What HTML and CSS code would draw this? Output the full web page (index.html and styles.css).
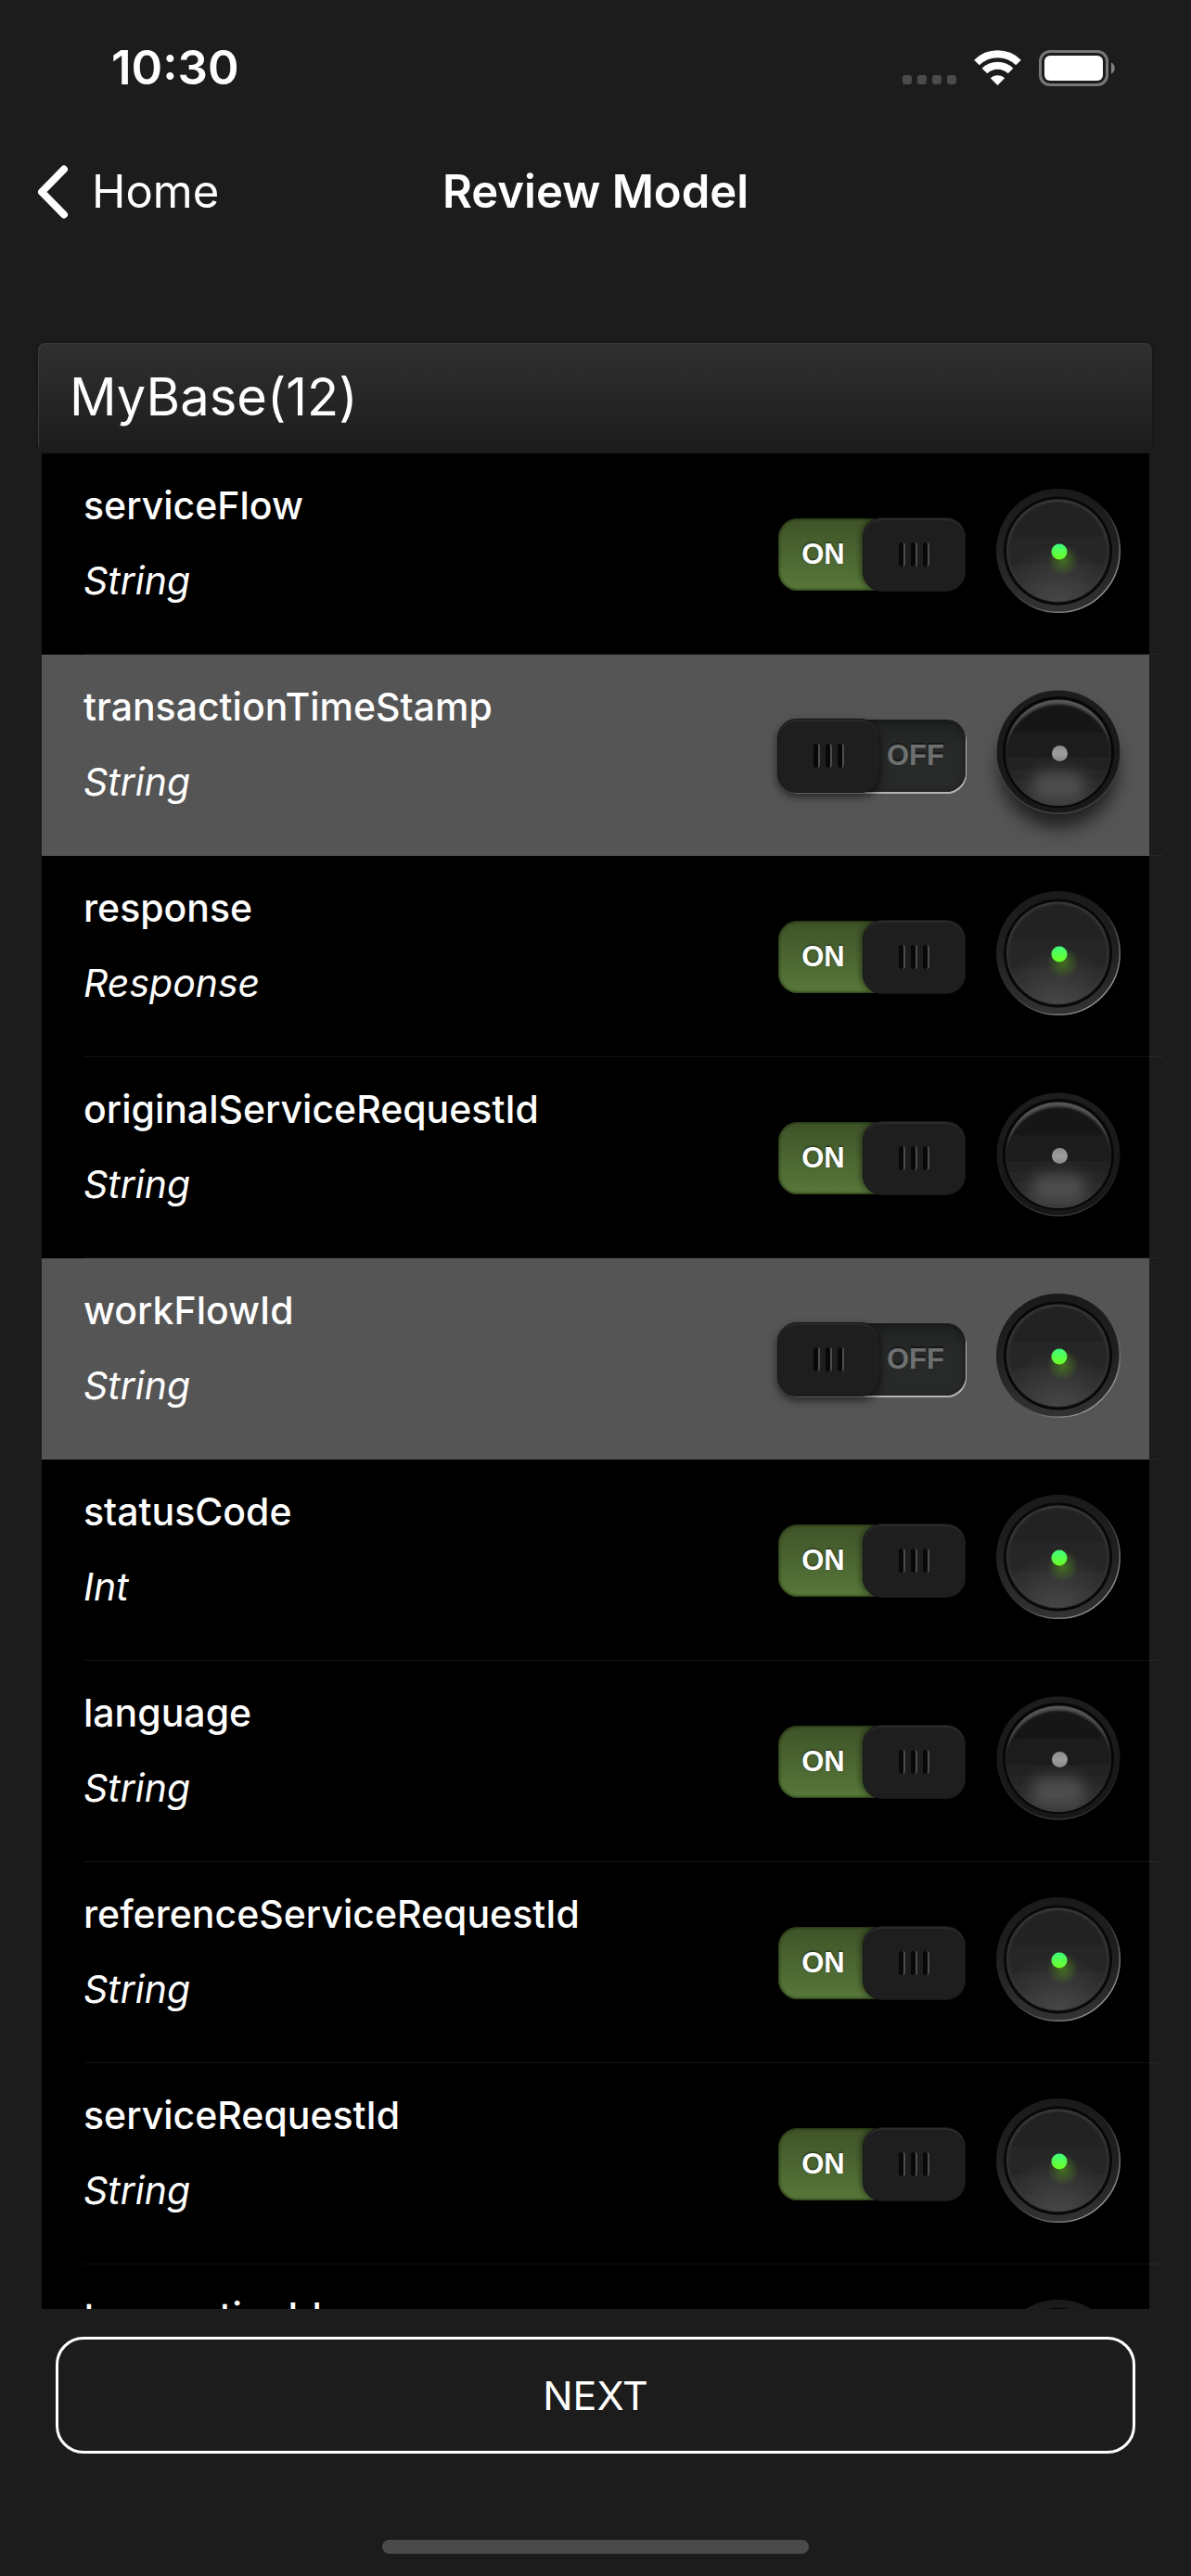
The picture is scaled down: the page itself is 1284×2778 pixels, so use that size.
FILE: index.html
```
<!DOCTYPE html>
<html lang="en">
<head>
<meta charset="utf-8">
<meta name="viewport" content="width=device-width, initial-scale=1">
<title>Review Model</title>
<link rel="stylesheet" href="styles.css">
</head>
<body>
<svg class="defs" aria-hidden="true">
  <defs>
    <linearGradient id="rim-lit" x1="0" y1="0" x2="0" y2="1"><stop offset="0" stop-color="#1a1a1a"/><stop offset=".5" stop-color="#202020"/><stop offset="1" stop-color="#333"/></linearGradient>
    <linearGradient id="edge-lit" x1="0" y1="0" x2="1" y2="1"><stop offset=".5" stop-color="#fff" stop-opacity="0"/><stop offset=".85" stop-color="#fff" stop-opacity=".5"/></linearGradient>
    <linearGradient id="face-lit" x1="0" y1="0" x2="0" y2="1"><stop offset="0" stop-color="#202020"/><stop offset=".6" stop-color="#282828"/><stop offset="1" stop-color="#303030"/></linearGradient>
    <radialGradient id="sheen-lit" cx=".5" cy="1.05" r=".6"><stop offset="0" stop-color="#484848"/><stop offset="1" stop-color="#484848" stop-opacity="0"/></radialGradient>
    <linearGradient id="lip-lit" x1="0" y1="0" x2="0" y2="1"><stop offset="0" stop-color="#3c3c3c"/><stop offset=".5" stop-color="#343434"/><stop offset="1" stop-color="#333"/></linearGradient>
    <linearGradient id="led-lit" x1="0" y1="0" x2="0" y2="1"><stop offset="0" stop-color="#3dff7c"/><stop offset="1" stop-color="#70ff24"/></linearGradient>
    <radialGradient id="glow"><stop offset="0" stop-color="#4d8a1c" stop-opacity=".7"/><stop offset="1" stop-color="#4d8a1c" stop-opacity="0"/></radialGradient>
    <linearGradient id="rim-dim" x1="0" y1="0" x2="0" y2="1"><stop offset="0" stop-color="#1d1d1d"/><stop offset=".5" stop-color="#191919"/><stop offset="1" stop-color="#171717"/></linearGradient>
    <linearGradient id="edge-dim" x1="0" y1="0" x2="0" y2="1"><stop offset=".6" stop-color="#444" stop-opacity="0"/><stop offset="1" stop-color="#444"/></linearGradient>
    <linearGradient id="crest" x1="0" y1="0" x2="0" y2="1"><stop offset="0" stop-color="#555"/><stop offset=".3" stop-color="#4a4a4a"/><stop offset=".5" stop-color="#262626"/><stop offset="1" stop-color="#383838"/></linearGradient>
    <linearGradient id="face-dim" x1="0" y1="0" x2="0" y2="1"><stop offset="0" stop-color="#171717"/><stop offset=".4" stop-color="#1b1b1b"/><stop offset="1" stop-color="#363636"/></linearGradient>
    <linearGradient id="led-dim" x1="0" y1="0" x2="0" y2="1"><stop offset="0" stop-color="#8c8c8c"/><stop offset=".5" stop-color="#9c9c9c"/><stop offset="1" stop-color="#8a8a8a"/></linearGradient>
    <filter id="soft" x="-50%" y="-80%" width="200%" height="260%"><feGaussianBlur stdDeviation="8"/></filter>
    <filter id="fine" x="-10%" y="-10%" width="120%" height="120%"><feGaussianBlur stdDeviation="1"/></filter>
    <clipPath id="face-clip"><circle cx="67" cy="68" r="57"/></clipPath>
  </defs>
  <symbol id="knob-lit" viewBox="0 0 134 134">
    <circle cx="67" cy="67" r="67" fill="url(#rim-lit)"/>
    <circle cx="67" cy="67" r="66.3" fill="none" stroke="url(#edge-lit)" stroke-width="1.4"/>
    <circle cx="66.5" cy="67" r="58.5" fill="#080808"/>
    <circle cx="66.5" cy="67" r="55.5" fill="url(#lip-lit)"/>
    <circle cx="66.5" cy="67.5" r="53.5" fill="url(#face-lit)" filter="url(#fine)"/>
    <circle cx="66.5" cy="67" r="54.5" fill="url(#sheen-lit)"/>
    <circle cx="72" cy="77" r="17" fill="url(#glow)"/>
    <circle cx="68" cy="68" r="8.5" fill="url(#led-lit)"/>
  </symbol>
  <symbol id="knob-dim" viewBox="0 0 134 134">
    <circle cx="67" cy="67" r="66.5" fill="url(#rim-dim)"/>
    <circle cx="67" cy="67" r="66" fill="none" stroke="url(#edge-dim)" stroke-width="1"/>
    <circle cx="67" cy="67" r="60" fill="#070707"/>
    <circle cx="67" cy="67.5" r="57" fill="url(#crest)"/>
    <g clip-path="url(#face-clip)">
      <circle cx="67" cy="73" r="57.5" fill="url(#face-dim)" filter="url(#fine)"/>
      <rect x="38" y="88" width="58" height="32" rx="14" fill="#4d4d4d" filter="url(#soft)"/>
    </g>
    <circle cx="68.5" cy="68.5" r="8.5" fill="url(#led-dim)"/>
  </symbol>
</svg>

<div class="app">
  <header class="status-bar">
    <time class="clock">10:30</time>
    <div class="indicators">
      <span class="signal"><i></i><i></i><i></i><i></i></span>
      <svg class="wifi" viewBox="0 0 51 38" aria-label="Wi-Fi">
        <g fill="none" stroke="#fff">
          <path d="M3 13.5A32 32 0 0 1 48 13.5" stroke-width="8"/>
          <path d="M11.5 22.500A20 20 0 0 1 39.500 22.500" stroke-width="8"/>
        </g>
        <path d="M25.500 38 17.800 30.300a11 11 0 0 1 15.400 0z" fill="#fff"/>
      </svg>
      <svg class="battery" viewBox="0 0 82 39" aria-label="Battery full">
        <rect x="1.5" y="1.5" width="72" height="36" rx="10.5" fill="none" stroke="#777" stroke-width="3"/>
        <rect x="6" y="6" width="63" height="27" rx="6" fill="#fff"/>
        <path d="M78 13.500c5 2 5 10 0 12z" fill="#808080"/>
      </svg>
    </div>
  </header>

  <nav class="nav-bar">
    <a class="back" href="#home">
      <svg class="chevron" viewBox="0 0 34 58" aria-hidden="true"><path d="M29 4.500 5 29 29 53.500" fill="none" stroke="#fff" stroke-width="8" stroke-linecap="round" stroke-linejoin="round"/></svg>
      <span>Home</span>
    </a>
    <h1 class="title">Review Model</h1>
  </nav>

  <main class="model">
    <h2 class="section-head">MyBase(12)</h2>
    <ul class="fields">
      <li class="field">
        <div class="text"><span class="name">serviceFlow</span><span class="type">String</span></div>
        <label class="toggle"><input type="checkbox" aria-label="serviceFlow" checked><span class="on">ON</span><span class="off">OFF</span><span class="thumb"><i></i><i></i><i></i></span></label>
        <button class="knob lit" type="button" aria-label="serviceFlow options"><svg><use href="#knob-lit"/></svg></button>
      </li>
      <li class="field excluded">
        <div class="text"><span class="name">transactionTimeStamp</span><span class="type">String</span></div>
        <label class="toggle"><input type="checkbox" aria-label="transactionTimeStamp"><span class="on">ON</span><span class="off">OFF</span><span class="thumb"><i></i><i></i><i></i></span></label>
        <button class="knob dim" type="button" aria-label="transactionTimeStamp options"><svg><use href="#knob-dim"/></svg></button>
      </li>
      <li class="field">
        <div class="text"><span class="name">response</span><span class="type">Response</span></div>
        <label class="toggle"><input type="checkbox" aria-label="response" checked><span class="on">ON</span><span class="off">OFF</span><span class="thumb"><i></i><i></i><i></i></span></label>
        <button class="knob lit" type="button" aria-label="response options"><svg><use href="#knob-lit"/></svg></button>
      </li>
      <li class="field">
        <div class="text"><span class="name">originalServiceRequestId</span><span class="type">String</span></div>
        <label class="toggle"><input type="checkbox" aria-label="originalServiceRequestId" checked><span class="on">ON</span><span class="off">OFF</span><span class="thumb"><i></i><i></i><i></i></span></label>
        <button class="knob dim" type="button" aria-label="originalServiceRequestId options"><svg><use href="#knob-dim"/></svg></button>
      </li>
      <li class="field excluded">
        <div class="text"><span class="name">workFlowId</span><span class="type">String</span></div>
        <label class="toggle"><input type="checkbox" aria-label="workFlowId"><span class="on">ON</span><span class="off">OFF</span><span class="thumb"><i></i><i></i><i></i></span></label>
        <button class="knob lit" type="button" aria-label="workFlowId options"><svg><use href="#knob-lit"/></svg></button>
      </li>
      <li class="field">
        <div class="text"><span class="name">statusCode</span><span class="type">Int</span></div>
        <label class="toggle"><input type="checkbox" aria-label="statusCode" checked><span class="on">ON</span><span class="off">OFF</span><span class="thumb"><i></i><i></i><i></i></span></label>
        <button class="knob lit" type="button" aria-label="statusCode options"><svg><use href="#knob-lit"/></svg></button>
      </li>
      <li class="field">
        <div class="text"><span class="name">language</span><span class="type">String</span></div>
        <label class="toggle"><input type="checkbox" aria-label="language" checked><span class="on">ON</span><span class="off">OFF</span><span class="thumb"><i></i><i></i><i></i></span></label>
        <button class="knob dim" type="button" aria-label="language options"><svg><use href="#knob-dim"/></svg></button>
      </li>
      <li class="field">
        <div class="text"><span class="name">referenceServiceRequestId</span><span class="type">String</span></div>
        <label class="toggle"><input type="checkbox" aria-label="referenceServiceRequestId" checked><span class="on">ON</span><span class="off">OFF</span><span class="thumb"><i></i><i></i><i></i></span></label>
        <button class="knob lit" type="button" aria-label="referenceServiceRequestId options"><svg><use href="#knob-lit"/></svg></button>
      </li>
      <li class="field">
        <div class="text"><span class="name">serviceRequestId</span><span class="type">String</span></div>
        <label class="toggle"><input type="checkbox" aria-label="serviceRequestId" checked><span class="on">ON</span><span class="off">OFF</span><span class="thumb"><i></i><i></i><i></i></span></label>
        <button class="knob lit" type="button" aria-label="serviceRequestId options"><svg><use href="#knob-lit"/></svg></button>
      </li>
      <li class="field">
        <div class="text"><span class="name">transactionId</span></div>
        <button class="knob lit" type="button" aria-label="transactionId options"><svg><use href="#knob-lit"/></svg></button>
      </li>
    </ul>
  </main>

  <footer class="footer">
    <button class="next" type="button">NEXT</button>
    <div class="home-indicator"></div>
  </footer>
</div>
</body>
</html>
```
FILE: styles.css
```
* { box-sizing: border-box; }

body {
  margin: 0;
  background: #1c1c1c;
  color: #fff;
  font-family: Inter, "Liberation Sans", sans-serif;
}

button { padding: 0; border: 0; background: none; color: inherit; font: inherit; }

.defs { position: absolute; width: 0; height: 0; }

.app { display: flex; flex-direction: column; height: 100vh; }

/* Status bar */
.status-bar {
  display: flex;
  flex: none;
  align-items: center;
  justify-content: space-between;
  height: 146px;
  padding: 0 82px 0 120px;
}
.clock { font-size: 51px; font-weight: 600; line-height: 60px; }
.indicators { display: flex; align-items: center; gap: 19px; }
.signal { display: flex; align-self: flex-end; gap: 6px; margin-bottom: 2px; }
.signal i { width: 10px; height: 10px; border-radius: 3px; background: #4b4b4b; }
.wifi { width: 51px; height: 38px; }
.battery { width: 82px; height: 39px; }

/* Navigation bar */
.nav-bar {
  display: grid;
  flex: none;
  grid-template-columns: 1fr auto 1fr;
  align-items: center;
  height: 122px;
  padding: 0 40px;
  font-size: 49px;
  line-height: 60px;
}
.back {
  display: flex;
  align-items: center;
  gap: 25px;
  color: inherit;
  text-decoration: none;
}
.chevron { width: 34px; height: 58px; }
.title { margin: 0; font-size: 49px; font-weight: 600; }

/* Field list */
.model {
  display: flex;
  flex: 1;
  flex-direction: column;
  min-height: 0;
  padding-top: 102px;
  overflow: hidden;
}
.section-head {
  flex: none;
  margin: 0 42px 2px 41px;
  padding: 0 34px;
  border-radius: 8px;
  background: linear-gradient(#303030, #1c1c1c);
  box-shadow: inset 1px 1px 1px #3c3c3c, 0 0 3px #111;
  font-size: 56px;
  font-weight: 400;
  line-height: 117px;
}
.fields { margin: 0 45px; padding: 0; list-style: none; }
.field {
  position: relative;
  display: flex;
  align-items: flex-start;
  height: 217px;
  padding: 38px 31px 0 45px;
  background: #000;
}
.field.excluded { background: #555; }
.field::after {
  content: "";
  position: absolute;
  right: -15px;
  bottom: 0;
  left: 45px;
  height: 1px;
  background: rgb(84 84 88 / 20%);
}
.text {
  display: flex;
  flex: 1;
  flex-direction: column;
  margin-top: -22px;
  font-size: 41px;
  line-height: 81px;
}
.name { font-weight: 500; }
.type { font-style: italic; }

/* Toggle */
.toggle {
  position: relative;
  display: grid;
  grid-template-columns: 91px 1fr;
  align-items: center;
  width: 202px;
  height: 78px;
  margin: 32px 33px 0 0;
  border-radius: 21px;
  background: linear-gradient(#3e5328, #58783a);
  box-shadow: inset 0 0 3px 1px #20300f;
  font: bold 31px "Liberation Sans", Arial, sans-serif;
  text-align: center;
  text-shadow: 0 -1px 2px rgb(0 0 0 / 60%);
}
.toggle input { position: absolute; inset: 0; margin: 0; opacity: 0; }
.toggle .on { padding-left: 6px; }
.toggle .off { display: none; color: #6e7071; text-shadow: 0 -2px 1px #161818; }
.thumb {
  position: absolute;
  top: -1px;
  right: 0;
  display: flex;
  align-items: center;
  justify-content: center;
  gap: 6px;
  width: 111px;
  height: 80px;
  border: 1px solid #171717;
  border-radius: 21px;
  background: #1e1e1e;
  box-shadow: inset 0 2px 1px #2c2c2c, -2px 0 6px rgb(0 0 0 / 45%);
}
.thumb i {
  width: 7px;
  height: 26px;
  border-right: 2px solid #4c4c4c;
  border-radius: 3px;
  background: #080808;
}
.toggle:has(input:not(:checked)) {
  grid-template-columns: 110px 1fr;
  background: linear-gradient(#202222, #282a29 40%);
  box-shadow: inset 0 2px 6px #151616, 1px 2px 0 #b5b5b5;
}
input:not(:checked) ~ .on { display: none; }
input:not(:checked) ~ .off { display: block; grid-column: 2; padding-right: 16px; }
input:not(:checked) ~ .thumb {
  right: auto;
  left: -1px;
  box-shadow: inset 0 2px 1px #2a2a2a, 0 4px 10px rgb(0 0 0 / 60%);
}

/* Round button */
.knob { flex: none; width: 134px; height: 134px; border-radius: 50%; }
.knob svg { display: block; width: 100%; height: 100%; }
.knob.dim { box-shadow: 0 18px 20px -4px rgb(0 0 0 / 65%); }

/* Footer */
.footer {
  display: flex;
  flex: none;
  flex-direction: column;
  align-items: center;
  padding: 30px 60px 24px;
}
.next {
  width: 100%;
  height: 126px;
  border: 3px solid #fff;
  border-radius: 30px;
  font-size: 43px;
}
.home-indicator {
  width: 460px;
  height: 15px;
  margin-top: 93px;
  border-radius: 8px;
  background: #4a4a4a;
}
```
